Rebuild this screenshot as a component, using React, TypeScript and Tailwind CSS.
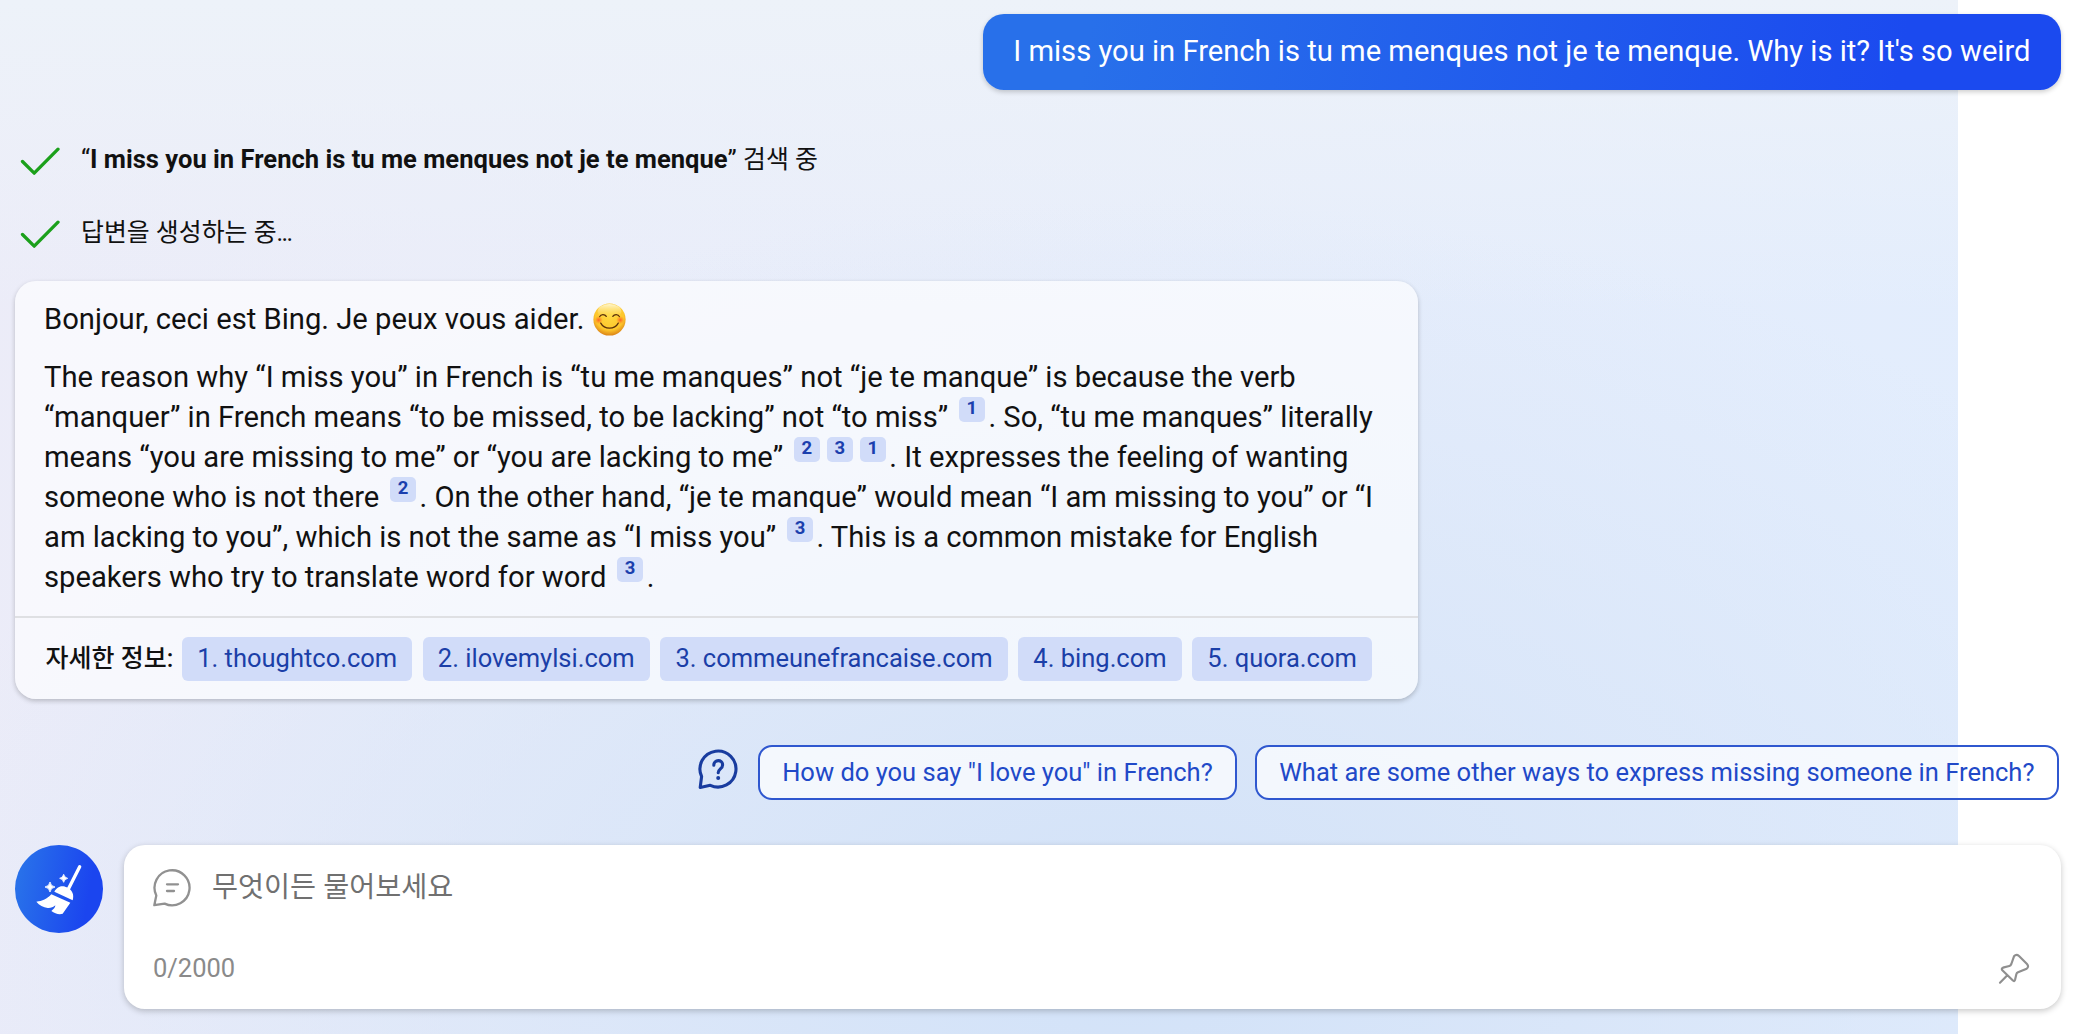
import type { ReactNode } from "react";

const sources = ["thoughtco.com", "ilovemylsi.com", "commeunefrancaise.com", "bing.com", "quora.com"];

const suggestions = [
  'How do you say "I love you" in French?',
  "What are some other ways to express missing someone in French?",
];

function CheckIcon() {
  return (
    <svg className="w-10 h-8 mt-[5px] shrink-0" viewBox="0 0 40 32" fill="none">
      <path d="M2.5 15.5 14.2 27.2 38 3.2" stroke="#1ba01b" strokeWidth="3.3" strokeLinecap="round" strokeLinejoin="round" />
    </svg>
  );
}

function SmileIcon() {
  return (
    <svg className="inline-block w-[33px] h-[33px] align-[-6.5px] ml-[9px]" viewBox="0 0 32 32" fill="none">
      <defs>
        <radialGradient id="face" cx="0.5" cy="0.38" r="0.64">
          <stop offset="0" stopColor="#ffd93f" />
          <stop offset="0.7" stopColor="#fdc62c" />
          <stop offset="1" stopColor="#d87c13" />
        </radialGradient>
        <linearGradient id="shine" x1="0" y1="0" x2="0" y2="1">
          <stop offset="0" stopColor="#fff6cf" />
          <stop offset="1" stopColor="#ffe165" stopOpacity="0" />
        </linearGradient>
        <radialGradient id="cheek">
          <stop offset="0" stopColor="#ff5b22" stopOpacity="0.95" />
          <stop offset="1" stopColor="#ff7a22" stopOpacity="0" />
        </radialGradient>
      </defs>
      <circle cx="16" cy="16" r="15.6" fill="url(#face)" />
      <ellipse cx="16" cy="8" rx="11.5" ry="7" fill="url(#shine)" />
      <circle cx="5.5" cy="16.5" r="4" fill="url(#cheek)" />
      <circle cx="26.5" cy="16.5" r="4" fill="url(#cheek)" />
      <path d="M6.5 13.2c1-2.6 5-2.6 6.4-.2M19.2 13c1.4-2.4 5.4-2.4 6.4.2M7.5 19.5c3.6 6.6 13.4 6.6 17 0" stroke="#5a300a" strokeWidth="1.2" strokeLinecap="round" />
    </svg>
  );
}

function QuestionIcon() {
  return (
    <svg className="w-10 h-10 mb-1.5 shrink-0" viewBox="0 0 40 40" fill="none" stroke="#193c9f" strokeWidth="3.1" strokeLinecap="round" strokeLinejoin="round">
      <path d="M3.6 27.5A18 18 0 1 1 12.3 36.3L2.2 38.4Z" />
      <path d="M15.8 16.2c0-6 8.800-6 8.800-.3 0 4-4.400 4-4.400 7.800" />
      <circle cx="20.2" cy="29" r="1" fill="#193c9f" strokeWidth="2" />
    </svg>
  );
}

function ChatIcon() {
  return (
    <svg className="w-10 h-10 shrink-0" viewBox="0 0 40 40" fill="none" stroke="#919191" strokeWidth="2.3" strokeLinecap="round" strokeLinejoin="round">
      <path d="M4.3 27.4A17.5 17.5 0 1 1 12.6 35.6L2.3 37.2Z" />
      <path d="M15 16.3h11M15 23h7" />
    </svg>
  );
}

function BroomIcon() {
  return (
    <svg className="w-[88px] h-[88px]" viewBox="44 44 264 264" fill="#fff">
      <path d="M238 109 203 178" stroke="#fff" strokeWidth="10" strokeLinecap="round" />
      <path d="M162 184C172 165 189 165 199 171 216 179 222 193 217 210Z" />
      <path d="M153 192 210 217 187 250C176 254 163 249 153 242 160 237 165 231 165 225 158 231 150 234 142 233 129 231 117 225 108 214 126 213 140 206 153 192Z" />
      <path d="M149 155Q151 168 164 170 151 172 149 185 147 172 134 170 147 168 149 155ZM190 132Q192 142 202 144 192 146 190 156 188 146 178 144 188 142 190 132Z" stroke="#fff" strokeWidth="2.5" />
    </svg>
  );
}

function PinIcon() {
  return (
    <svg className="w-[33px] h-[33px]" viewBox="474 696 99 99" fill="none" stroke="#8f8f8f" strokeWidth="6.5" strokeLinecap="round" strokeLinejoin="round">
      <path d="M522 709Q529 701 537 708L561 732Q568 740 560 746L534 757Q530 759 529 763L525 780Q523 786 518 781L487 751Q483 746 489 743L508 738Q512 737 514 732ZM502 766 480 788" />
    </svg>
  );
}

function Cite({ n }: { n: number }) {
  return (
    <span className="inline-block w-[25.5px] h-[25.5px] mx-[3.75px] -mt-4 align-[13.5px] rounded-[5px] bg-[#d1dcf9] text-center text-[18.5px] leading-[23px] font-bold text-[#1b3fae]">
      {n}
    </span>
  );
}

function Line({ children }: { children: ReactNode }) {
  return <span className="block h-[40.1px] whitespace-nowrap">{children}</span>;
}

function Status({ children }: { children: ReactNode }) {
  return (
    <div className="flex items-center h-[34px] pl-5 gap-[21px] text-[25.55px] leading-[34px] whitespace-nowrap">
      <CheckIcon />
      <p>{children}</p>
    </div>
  );
}

export default function App() {
  return (
    <div className="w-[2079px] h-[1034px] overflow-hidden bg-white bg-no-repeat bg-[length:1958px_100%] bg-[image:radial-gradient(ellipse_1250px_760px_at_1130px_960px,#d2e2f8_0%,#d6e4f8cc_35%,#dfeafb00_100%),linear-gradient(180deg,#edf2f9_0%,#edf2f900_30%),linear-gradient(100deg,#ececf8_0%,#e8edfa_45%,#e2edfd_100%)] font-['Roboto','Noto_Sans_CJK_KR',sans-serif] text-[#111]">
      <div className="flex justify-end pt-3.5 pr-[18.5px]">
        <p className="h-[76px] rounded-[21px] bg-[linear-gradient(100deg,#2870ea_10%,#1b4aef_85%)] px-[30px] pt-[17px] text-[29.17px] leading-10 text-white whitespace-nowrap shadow-[0_2px_5px_rgba(0,0,0,0.2)]">
          I miss you in French is tu me menques not je te menque. Why is it? It's so weird
        </p>
      </div>

      <div className="flex flex-col gap-[39px] pt-[52px]">
        <Status>
          “<b>I miss you in French is tu me menques not je te menque</b>”{" "}
          <span className="text-[24.9px]">검색 중</span>
        </Status>
        <Status>
          <span className="text-[24.9px]">답변을 생성하는 중</span>
          <span className="text-[25px] tracking-[-1.6px]">...</span>
        </Status>
      </div>

      <section className="mt-8 ml-[15px] w-[1403px] h-[418px] rounded-[21px] bg-white/65 shadow-[0_2px_5px_rgba(0,0,0,0.22)]">
        <div className="h-[337px] border-b-2 border-[#dfe0e3] pl-[29px] pt-[18px] text-[29.2px] leading-10">
          <p className="whitespace-nowrap">
            Bonjour, ceci est Bing. Je peux vous aider.
            <SmileIcon />
          </p>
          <p className="mt-[18px]">
            <Line>The reason why “I miss you” in French is “tu me manques” not “je te manque” is because the verb</Line>
            <Line>
              “manquer” in French means “to be missed, to be lacking” not “to miss” <Cite n={1} />. So, “tu me manques” literally
            </Line>
            <Line>
              means “you are missing to me” or “you are lacking to me” <Cite n={2} />
              <Cite n={3} />
              <Cite n={1} />. It expresses the feeling of wanting
            </Line>
            <Line>
              someone who is not there <Cite n={2} />. On the other hand, “je te manque” would mean “I am missing to you” or “I
            </Line>
            <Line>
              am lacking to you”, which is not the same as “I miss you” <Cite n={3} />. This is a common mistake for English
            </Line>
            <Line>
              speakers who try to translate word for word <Cite n={3} />.
            </Line>
          </p>
        </div>
        <div className="flex items-center gap-[10.7px] h-[81px] pl-[30.5px] text-[25.5px] whitespace-nowrap">
          <span className="w-[126px] text-[25px] font-medium">자세한 정보:</span>
          {sources.map((s, i) => (
            <a key={s} className="h-11 rounded-md bg-[#d1dcf9] px-[15px] leading-[42px] text-[#1b3fa8]">
              {i + 1}. {s}
            </a>
          ))}
        </div>
      </section>

      <div className="flex justify-end items-center gap-[18.5px] mt-[46px] pr-[20.5px]">
        <div className="pr-0.5">
          <QuestionIcon />
        </div>
        {suggestions.map((s) => (
          <button
            key={s}
            className="h-[54.5px] rounded-[14px] border-2 border-[#2f57cf] bg-white/70 px-[22px] text-[25.53px] leading-[49px] text-[#2149c8] whitespace-nowrap"
          >
            {s}
          </button>
        ))}
      </div>

      <div className="flex gap-[21px] mt-[45.500px] pl-[15px] pr-[18.5px]">
        <button className="w-[88px] h-[88px] shrink-0 rounded-full bg-[linear-gradient(100deg,#2870ea_10%,#1b45ef_80%)]">
          <BroomIcon />
        </button>
        <div className="flex flex-1 flex-col justify-between h-[164px] rounded-[21px] bg-white pl-7 pr-[30px] pt-[23px] pb-6 shadow-[0_2px_6px_rgba(0,0,0,0.22)]">
          <div className="flex items-center gap-5">
            <ChatIcon />
            <span className="text-[28.3px] leading-10 text-[#707070]">무엇이든 물어보세요</span>
          </div>
          <div className="flex items-center justify-between pl-px">
            <span className="text-[25.5px] leading-[34px] text-[#8a8a8a]">0/2000</span>
            <PinIcon />
          </div>
        </div>
      </div>
    </div>
  );
}
